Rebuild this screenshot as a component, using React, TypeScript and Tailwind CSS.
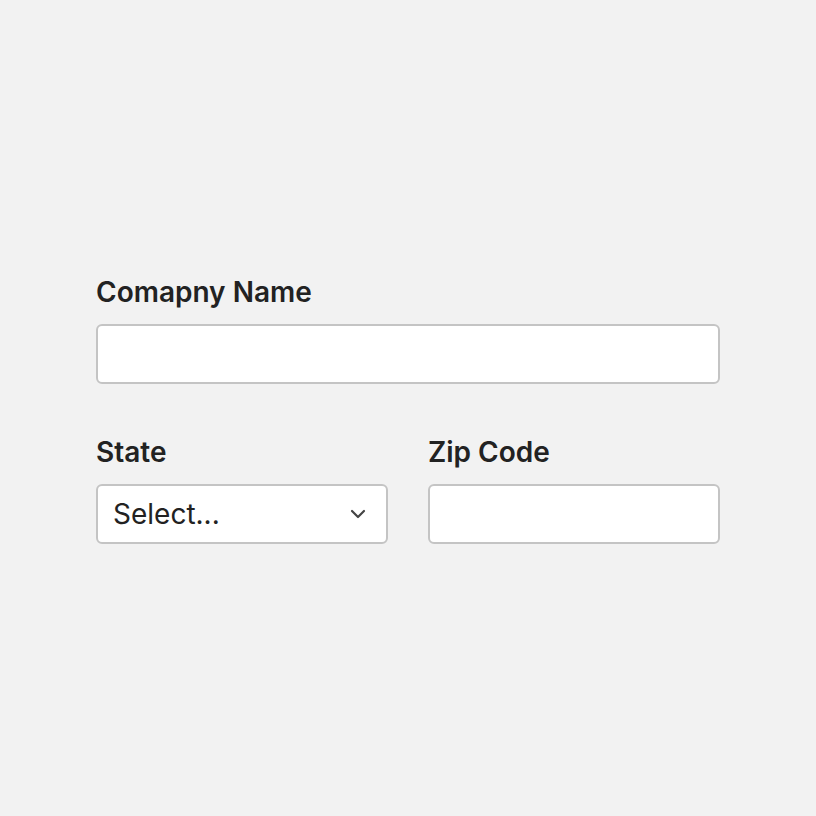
import React from "react";

export default function App() {
  return (
    <div className="min-h-screen w-full bg-[#f2f2f2] flex items-center justify-center" style={{ fontFamily: "Inter, 'Noto Sans', sans-serif" }}>
      <div className="w-[624px] flex flex-col gap-[49px] text-[#222]">
        <div className="flex flex-col gap-[13px]">
          <label className="text-[28px] leading-[38px] font-semibold">Comapny Name</label>
          <div className="h-[60px] rounded-[6px] border-2 border-[#c4c4c4] bg-white" />
        </div>
        <div className="grid grid-cols-2 gap-[40px]">
          <div className="flex flex-col gap-[13px]">
            <label className="text-[28px] leading-[38px] font-semibold">State</label>
            <div className="h-[60px] rounded-[6px] border-2 border-[#c4c4c4] bg-white flex items-center justify-between pl-[15px] pr-[20px]">
              <span className="text-[28px] leading-[34px] text-[#222]">Select...</span>
              <svg width="16" height="10" viewBox="0 0 16 10" fill="none">
                <path d="M2 2 L8 8 L14 2" stroke="#444" strokeWidth="2.2" strokeLinecap="round" strokeLinejoin="round" />
              </svg>
            </div>
          </div>
          <div className="flex flex-col gap-[13px]">
            <label className="text-[28px] leading-[38px] font-semibold">Zip Code</label>
            <div className="h-[60px] rounded-[6px] border-2 border-[#c4c4c4] bg-white" />
          </div>
        </div>
      </div>
    </div>
  );
}
